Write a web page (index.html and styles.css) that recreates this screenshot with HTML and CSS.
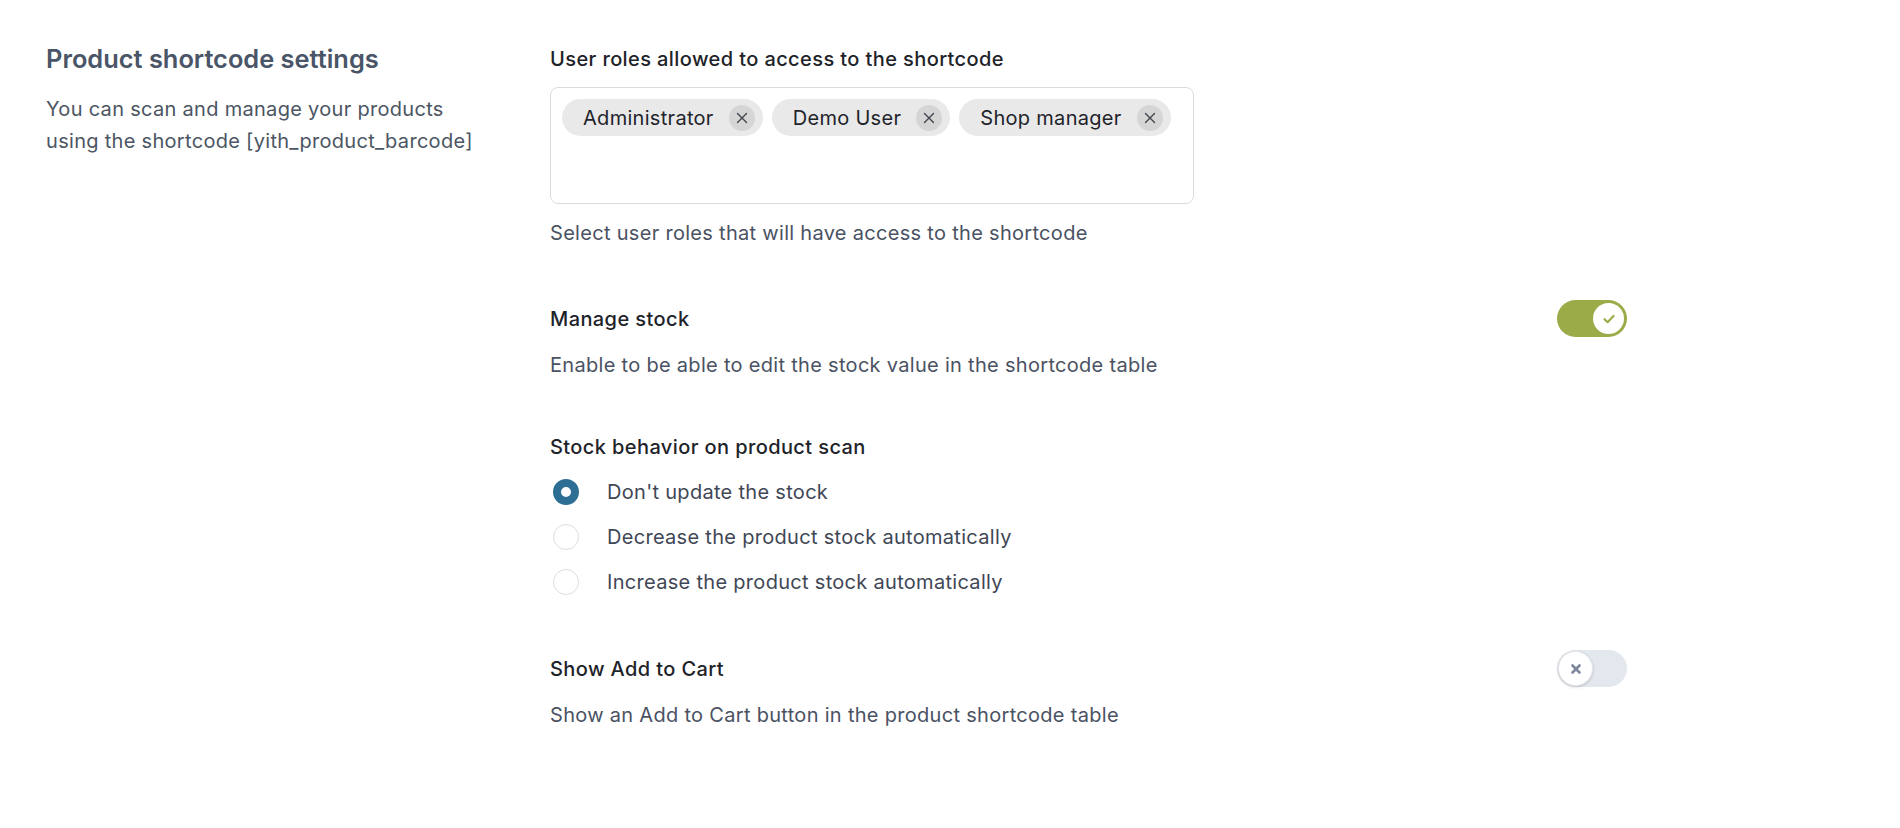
FILE: index.html
```html
<!DOCTYPE html>
<html lang="en">
<head>
<meta charset="utf-8">
<title>Product shortcode settings</title>
<link rel="stylesheet" href="styles.css">
</head>
<body>
<div class="page">
  <aside class="intro">
    <h2 class="intro-title">Product shortcode settings</h2>
    <p class="intro-desc">You can scan and manage your products<br>using the shortcode [yith_product_barcode]</p>
  </aside>
  <main class="fields">
    <section class="field">
      <div class="field-label">User roles allowed to access to the shortcode</div>
      <div class="select-box">
        <span class="chip">Administrator<span class="chip-x"><svg width="12" height="12" viewBox="0 0 12 12"><path d="M1.5 1.5 L10.5 10.5 M10.5 1.5 L1.5 10.5" stroke="#3b4049" stroke-width="1.3" stroke-linecap="round"/></svg></span></span>
        <span class="chip">Demo User<span class="chip-x"><svg width="12" height="12" viewBox="0 0 12 12"><path d="M1.5 1.5 L10.5 10.5 M10.5 1.5 L1.5 10.5" stroke="#3b4049" stroke-width="1.3" stroke-linecap="round"/></svg></span></span>
        <span class="chip">Shop manager<span class="chip-x"><svg width="12" height="12" viewBox="0 0 12 12"><path d="M1.5 1.5 L10.5 10.5 M10.5 1.5 L1.5 10.5" stroke="#3b4049" stroke-width="1.3" stroke-linecap="round"/></svg></span></span>
      </div>
      <div class="field-help help-after-box">Select user roles that will have access to the shortcode</div>
    </section>

    <section class="field">
      <div class="field-row">
        <div class="field-label">Manage stock</div>
        <span class="toggle toggle-on">
          <span class="knob">
            <svg width="14" height="14" viewBox="0 0 14 14"><path d="M2.5 7.2 L5.6 10.2 L11.5 4" fill="none" stroke="#9aab48" stroke-width="2.2" stroke-linecap="round" stroke-linejoin="round"/></svg>
          </span>
        </span>
      </div>
      <div class="field-help">Enable to be able to edit the stock value in the shortcode table</div>
    </section>

    <section class="field">
      <div class="field-label">Stock behavior on product scan</div>
      <div class="radios">
        <div class="radio-row"><span class="radio radio-on"></span><span class="radio-label">Don't update the stock</span></div>
        <div class="radio-row"><span class="radio"></span><span class="radio-label">Decrease the product stock automatically</span></div>
        <div class="radio-row"><span class="radio"></span><span class="radio-label">Increase the product stock automatically</span></div>
      </div>
    </section>

    <section class="field">
      <div class="field-row">
        <div class="field-label">Show Add to Cart</div>
        <span class="toggle toggle-off">
          <span class="knob">
            <svg width="14" height="14" viewBox="0 0 14 14"><path d="M3.5 3.5 L10.5 10.5 M10.5 3.5 L3.5 10.5" fill="none" stroke="#7d869a" stroke-width="2.6" stroke-linecap="round"/></svg>
          </span>
        </span>
      </div>
      <div class="field-help">Show an Add to Cart button in the product shortcode table</div>
    </section>
  </main>
</div>
</body>
</html>
```

FILE: styles.css
```css
* { box-sizing: border-box; }
html, body { margin: 0; padding: 0; background: #ffffff; }
body {
  font-family: Inter, "Noto Sans", "Liberation Sans", sans-serif;
  font-size: 20px;
  line-height: 30px;
  letter-spacing: 0.3px;
  color: #4a5263;
}
.page {
  display: flex;
  padding: 44px 0 0 46px;
}
.intro {
  width: 504px;
  flex: none;
}
.intro-title {
  margin: 0;
  font-size: 25.4px;
  line-height: 30px;
  font-weight: 600;
  letter-spacing: 0;
  color: #4a5568;
}
.intro-desc {
  margin: 19px 0 0;
  line-height: 32px;
  color: #4b5563;
}
.fields {
  width: 1077px;
  display: flex;
  flex-direction: column;
  gap: 52px;
}
.field-label {
  color: #1e2329;
  font-weight: 500;
  letter-spacing: 0.4px;
}
.field-row {
  display: flex;
  align-items: center;
  justify-content: space-between;
}
.field-help {
  margin-top: 13px;
  color: #4a5263;
}
.help-after-box { margin-top: 14px; }
.select-box {
  margin-top: 13px;
  width: 644px;
  height: 117px;
  border: 1px solid #d9dbde;
  border-radius: 8px;
  padding: 11px 11px;
  display: flex;
  flex-wrap: wrap;
  align-content: flex-start;
  gap: 9px;
}
.chip {
  display: inline-flex;
  align-items: center;
  height: 37px;
  padding: 0 8px 0 21px;
  border-radius: 19px;
  background: #e9e9e9;
  color: #1f242b;
  font-size: 20px;
}
.chip-x {
  margin-left: 15px;
  width: 26px;
  height: 26px;
  border-radius: 50%;
  background: #d5d5d5;
  display: inline-flex;
  align-items: center;
  justify-content: center;
}
.toggle {
  width: 70px;
  height: 37px;
  border-radius: 19px;
  display: flex;
  align-items: center;
  padding: 3px;
}
.toggle-on {
  background: #9aab48;
  justify-content: flex-end;
}
.toggle-off {
  background: #e3e7ee;
  justify-content: flex-start;
  padding: 0;
}
.knob {
  width: 31px;
  height: 31px;
  border-radius: 50%;
  background: #ffffff;
  display: flex;
  align-items: center;
  justify-content: center;
}
.toggle-off .knob {
  width: 35px;
  height: 35px;
  margin-left: 1px;
  border: 1px solid #e6e8ec;
  box-shadow: 0 1px 3px rgba(0,0,0,0.18);
}
.radios {
  margin-top: 15px;
  margin-bottom: 1px;
  display: flex;
  flex-direction: column;
  gap: 15px;
}
.radio-row {
  display: flex;
  align-items: center;
  height: 30px;
}
.radio {
  width: 26px;
  height: 26px;
  margin-left: 3px;
  border-radius: 50%;
  border: 1px solid #dcdee2;
  background: #fff;
  flex: none;
}
.radio-on {
  border: 8px solid #2d6f94;
  background: #ffffff;
}
.radio-label {
  margin-left: 28px;
  color: #3f4756;
}
```
